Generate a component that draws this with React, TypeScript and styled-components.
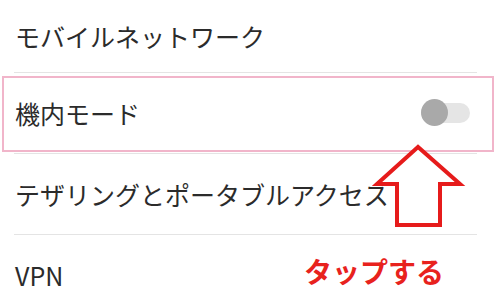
import React from "react";
import styled, { createGlobalStyle } from "styled-components";

const GlobalStyle = createGlobalStyle`
  html, body {
    margin: 0;
    padding: 0;
    background: #ffffff;
  }
  body {
    font-family: "Noto Sans CJK JP", "Noto Sans", sans-serif;
  }
`;

const Screen = styled.div`
  width: 500px;
  height: 293px;
  position: relative;
  overflow: hidden;
  background: #ffffff;
`;

const List = styled.div`
  display: flex;
  flex-direction: column;
`;

const Row = styled.div<{ $h: number }>`
  height: ${p => p.$h}px;
  display: flex;
  align-items: center;
  justify-content: space-between;
  padding: 0 30px 0 15px;
  position: relative;
  box-sizing: border-box;
`;

const Label = styled.span`
  font-size: 25px;
  line-height: 1;
  color: #2b2b2b;
  letter-spacing: 0;
`;

const Divider = styled.div`
  height: 1px;
  margin: 0 23px 0 14px;
  background: #e4e4e4;
`;

const Highlight = styled.div`
  position: absolute;
  top: 3px;
  left: 2px;
  right: 6px;
  bottom: 1px;
  border: 2px solid #f1b5ca;
  pointer-events: none;
`;

const Track = styled.div`
  width: 49px;
  height: 20px;
  border-radius: 10px;
  background: #e5e5e5;
  position: relative;
`;

const Thumb = styled.div`
  position: absolute;
  left: 0;
  top: -4px;
  width: 27px;
  height: 27px;
  border-radius: 50%;
  background: #a9a9a9;
`;

const Arrow = styled.svg`
  position: absolute;
  left: 370px;
  top: 140px;
`;

const Callout = styled.span`
  position: absolute;
  left: 304px;
  top: 253px;
  font-size: 28px;
  font-weight: 700;
  line-height: 36px;
  color: #e8221d;
`;

export default function App() {
  return (
    <>
      <GlobalStyle />
      <Screen>
        <List>
          <Row $h={72}>
            <Label>モバイルネットワーク</Label>
          </Row>
          <Divider />
          <Row $h={80}>
            <Label>機内モード</Label>
            <Track>
              <Thumb />
            </Track>
            <Highlight />
          </Row>
          <Divider />
          <Row $h={80}>
            <Label>テザリングとポータブルアクセス</Label>
          </Row>
          <Divider />
          <Row $h={80}>
            <Label>VPN</Label>
          </Row>
        </List>
        <Arrow width="100" height="92" viewBox="370 140 100 92">
          <polygon
            points="418,147 377,184 397,184 397,225 440,225 440,184 460,184"
            fill="#ffffff"
            stroke="#e61b1b"
            strokeWidth="4"
            strokeLinejoin="miter"
          />
        </Arrow>
        <Callout>タップする</Callout>
      </Screen>
    </>
  );
}
